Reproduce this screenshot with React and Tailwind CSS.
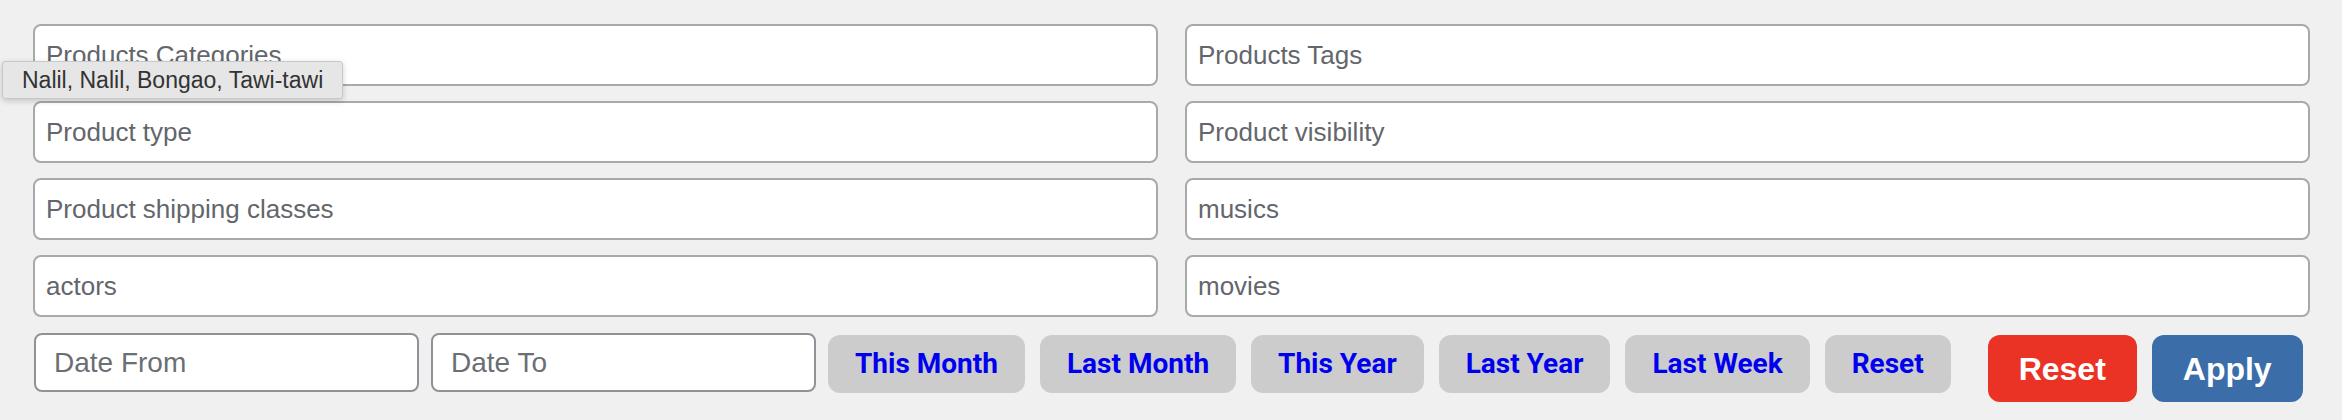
import React from 'react';

const FILTERS = [
  'Products Categories',
  'Products Tags',
  'Product type',
  'Product visibility',
  'Product shipping classes',
  'musics',
  'actors',
  'movies',
];

const QUICK_RANGES = ['This Month', 'Last Month', 'This Year', 'Last Year', 'Last Week', 'Reset'];

const App = () => {
  return (
    <div className="relative w-full h-[420px] bg-[#f0f0f0] pt-[24px] pl-[33px] pr-[32px] font-['Liberation_Sans',Arial,sans-serif]">
      <div className="grid grid-cols-2 gap-x-[27px] gap-y-[15px]">
        {FILTERS.map((label) => (
          <div
            key={label}
            className="h-[62px] flex items-center pl-[11px] bg-white border-2 border-[#a9a9a9] rounded-[8px] text-[26px] text-[#63666b]"
          >
            {label}
          </div>
        ))}
      </div>

      <div className="flex items-start mt-[16px] pl-px whitespace-nowrap">
        <div className="w-[385px] h-[59px] shrink-0 flex items-center pl-[18px] bg-white border-2 border-[#8f9297] rounded-[8px] text-[28px] text-[#6b6e73]">
          Date From
        </div>
        <div className="w-[385px] h-[59px] shrink-0 ml-[12px] flex items-center pl-[18px] bg-white border-2 border-[#8f9297] rounded-[8px] text-[28px] text-[#6b6e73]">
          Date To
        </div>

        <div className="flex gap-[15px] ml-[12px] mt-[2px] shrink-0">
          {QUICK_RANGES.map((r) => (
            <button
              key={r}
              className="h-[58px] px-[27px] shrink-0 rounded-[12px] bg-[#cccccc] text-[#0000ee] text-[28px] font-bold font-['Roboto',sans-serif]"
            >
              {r}
            </button>
          ))}
        </div>

        <div className="flex gap-[15px] ml-[37px] mt-[2px] shrink-0">
          <button className="h-[67px] w-[149px] rounded-[12px] bg-[#ea3324] text-white text-[32px] font-bold">
            Reset
          </button>
          <button className="h-[67px] w-[151px] rounded-[12px] bg-[#3b6ea9] text-white text-[32px] font-bold">
            Apply
          </button>
        </div>
      </div>

      {/* hover tooltip over the categories field */}
      <div className="absolute left-[2px] top-[61px] h-[38px] px-[19px] flex items-center bg-[#e6e6e6] border border-[#c8c8c8] rounded-[3px] shadow-[0_2px_6px_rgba(0,0,0,0.18)] text-[23px] text-[#333333]">
        Nalil, Nalil, Bongao, Tawi-tawi
      </div>
    </div>
  );
};

export default App;
